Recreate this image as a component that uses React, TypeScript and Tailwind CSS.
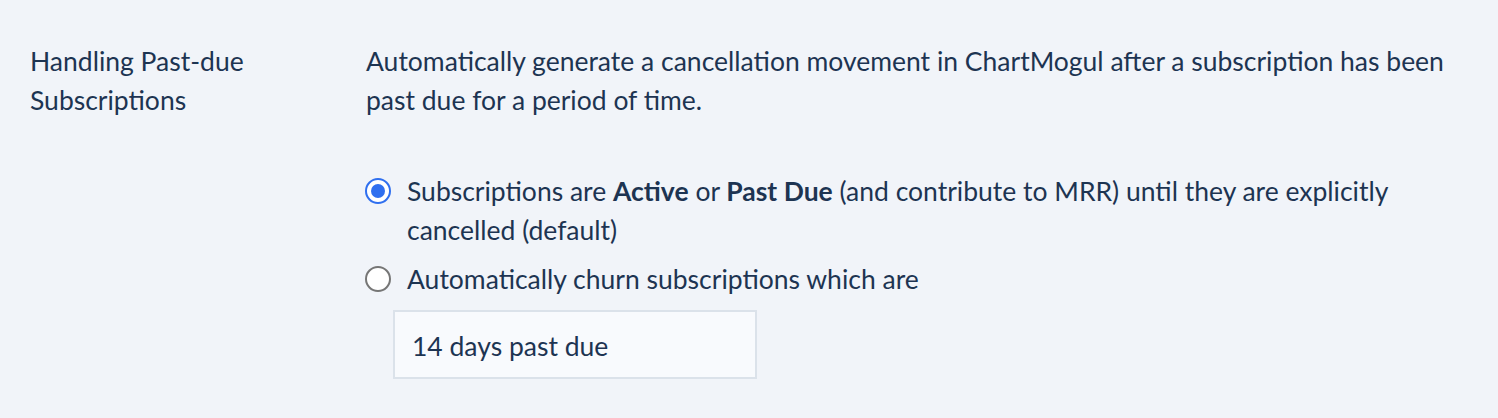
const App = () => {
  return (
    <div className="min-h-screen w-full bg-[#f1f4f9] text-[#1d3452] font-['Lato','Open_Sans',sans-serif] text-[26.5px] leading-[39px]">
      <div className="flex pl-[30px] pr-[30px] pt-[42px]">
        <div className="w-[336px] shrink-0">
          Handling Past-due
          <br />
          Subscriptions
        </div>
        <div className="flex-1">
          <p>
            Automatically generate a cancellation movement in ChartMogul after a subscription has been
            <br />
            past due for a period of time.
          </p>
          <div className="mt-[52px] flex flex-col gap-[10px]">
            <label className="flex items-start gap-[16px]">
              <span className="mt-[6px] ml-[-1px] flex h-[26px] w-[26px] shrink-0 items-center justify-center rounded-full border-2 border-[#2f6fef] bg-white">
                <span className="h-[14px] w-[14px] rounded-full bg-[#2f6fef]" />
              </span>
              <span>
                Subscriptions are <b className="font-bold">Active</b> or <b className="font-bold">Past Due</b> (and contribute to MRR) until they are explicitly
                <br />
                cancelled (default)
              </span>
            </label>
            <label className="flex items-start gap-[16px]">
              <span className="mt-[6px] ml-[-1px] h-[26px] w-[26px] shrink-0 rounded-full border-2 border-[#767676] bg-white" />
              <span>Automatically churn subscriptions which are</span>
            </label>
          </div>
          <div className="mt-[11px] ml-[27px] flex h-[69px] w-[364px] items-center border-2 border-[#dbe2ea] bg-[#f8fafd] pl-[17px] pt-[4px]">
            14 days past due
          </div>
        </div>
      </div>
    </div>
  );
};

export default App;
